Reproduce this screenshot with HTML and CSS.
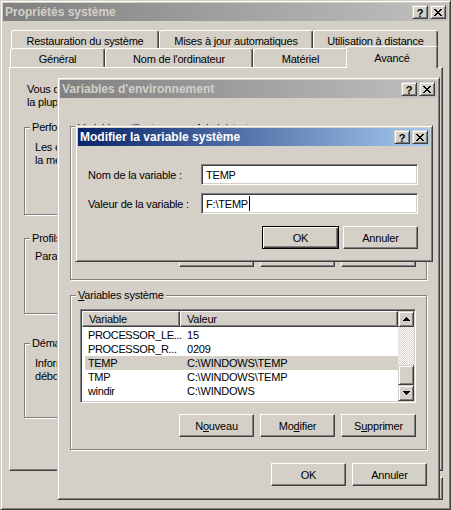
FILE: index.html
```html
<!DOCTYPE html>
<html lang="fr">
<head>
    <meta charset="UTF-8">
    <title>Propriétés système</title>
    <link rel="stylesheet" href="styles.css">
</head>
<body>
    <div class="desktop">

        <!-- Fenêtre principale : Propriétés système -->
        <div class="window sysprop">
            <div class="titlebar inactive">
                <span class="title">Propriétés système</span>
                <div class="title-buttons">
                    <button class="tbtn help">?</button>
                    <button class="tbtn close"><svg width="8" height="7" viewBox="0 0 8 7"><path d="M0 0h2v1H0zM6 0h2v1H6zM1 1h2v1H1zM5 1h2v1H5zM2 2h4v1H2zM3 3h2v1H3zM2 4h4v1H2zM1 5h2v1H1zM5 5h2v1H5zM0 6h2v1H0zM6 6h2v1H6z"/></svg></button>
                </div>
            </div>

            <div class="tabstrip">
                <div class="tab-row back">
                    <div class="tab w-restore">Restauration du système</div>
                    <div class="tab w-updates">Mises à jour automatiques</div>
                    <div class="tab w-remote">Utilisation à distance</div>
                </div>
                <div class="tab-row front">
                    <div class="tab w-general">Général</div>
                    <div class="tab w-name">Nom de l'ordinateur</div>
                    <div class="tab w-hardware">Matériel</div>
                    <div class="tab w-advanced selected">Avancé</div>
                </div>
            </div>

            <div class="tab-panel">
                <p class="intro">Vous devez ouvrir une session en tant qu'administrateur afin d'effectuer<br>la plupart de ces modifications.</p>

                <div class="group perf">
                    <span class="group-label">Performances</span>
                    <p>Les effets visuels, la planification du processeur, l'utilisation de<br>la mémoire et la mémoire virtuelle</p>
                </div>
                <div class="group profiles">
                    <span class="group-label">Profils des utilisateurs</span>
                    <p>Paramètres du Bureau liés à votre ouverture de session</p>
                </div>
                <div class="group startup">
                    <span class="group-label">Démarrage et récupération</span>
                    <p>Informations de démarrage du système, de défaillance du système et de<br>débogage</p>
                </div>
            </div>

            <div class="footer">
                <button class="btn">OK</button>
                <button class="btn">Annuler</button>
                <button class="btn">Appliquer</button>
            </div>
        </div>

        <!-- Variables d'environnement -->
        <div class="window envvars">
            <div class="titlebar inactive">
                <span class="title">Variables d'environnement</span>
                <div class="title-buttons">
                    <button class="tbtn help">?</button>
                    <button class="tbtn close"><svg width="8" height="7" viewBox="0 0 8 7"><path d="M0 0h2v1H0zM6 0h2v1H6zM1 1h2v1H1zM5 1h2v1H5zM2 2h4v1H2zM3 3h2v1H3zM2 4h4v1H2zM1 5h2v1H1zM5 5h2v1H5zM0 6h2v1H0zM6 6h2v1H6z"/></svg></button>
                </div>
            </div>

            <div class="env-body">
                <div class="group user-vars">
                    <span class="group-label"><u>V</u>ariables utilisateur pour Administrateur</span>
                    <div class="listview short">
                        <div class="lv-main">
                            <div class="lv-header">
                                <div class="lv-head col-name">Variable</div>
                                <div class="lv-head col-value">Valeur</div>
                            </div>
                            <div class="lv-rows"></div>
                        </div>
                    </div>
                    <div class="group-buttons">
                        <button class="btn">Nouveau</button>
                        <button class="btn">Modifier</button>
                        <button class="btn">Supprimer</button>
                    </div>
                </div>

                <div class="group system-vars">
                    <span class="group-label"><u>V</u>ariables système</span>
                    <div class="listview">
                        <div class="lv-main">
                            <div class="lv-header">
                                <div class="lv-head col-name">Variable</div>
                                <div class="lv-head col-value">Valeur</div>
                            </div>
                            <div class="lv-rows">
                                <div class="lv-row"><span class="col-name">PROCESSOR_LE...</span><span class="col-value">15</span></div>
                                <div class="lv-row"><span class="col-name">PROCESSOR_R...</span><span class="col-value">0209</span></div>
                                <div class="lv-row selected"><span class="col-name">TEMP</span><span class="col-value">C:\WINDOWS\TEMP</span></div>
                                <div class="lv-row"><span class="col-name">TMP</span><span class="col-value">C:\WINDOWS\TEMP</span></div>
                                <div class="lv-row"><span class="col-name">windir</span><span class="col-value">C:\WINDOWS</span></div>
                            </div>
                        </div>
                        <div class="scrollbar">
                            <div class="sb-btn"><svg width="7" height="4" viewBox="0 0 7 4"><path d="M3 0h1v1h1v1h1v1h1v1H0V3h1V2h1V1h1z"/></svg></div>
                            <div class="sb-track"></div>
                            <div class="sb-thumb"></div>
                            <div class="sb-btn"><svg width="7" height="4" viewBox="0 0 7 4"><path d="M0 0h7v1H6v1H5v1H4v1H3V3H2V2H1V1H0z"/></svg></div>
                        </div>
                    </div>
                    <div class="group-buttons">
                        <button class="btn">N<u>o</u>uveau</button>
                        <button class="btn">Mo<u>d</u>ifier</button>
                        <button class="btn">S<u>u</u>pprimer</button>
                    </div>
                </div>

                <div class="env-footer">
                    <button class="btn">OK</button>
                    <button class="btn">Annuler</button>
                </div>
            </div>
        </div>

        <!-- Modifier la variable système -->
        <div class="window editvar">
            <div class="titlebar">
                <span class="title">Modifier la variable système</span>
                <div class="title-buttons">
                    <button class="tbtn help">?</button>
                    <button class="tbtn close"><svg width="8" height="7" viewBox="0 0 8 7"><path d="M0 0h2v1H0zM6 0h2v1H6zM1 1h2v1H1zM5 1h2v1H5zM2 2h4v1H2zM3 3h2v1H3zM2 4h4v1H2zM1 5h2v1H1zM5 5h2v1H5zM0 6h2v1H0zM6 6h2v1H6z"/></svg></button>
                </div>
            </div>

            <div class="edit-body">
                <div class="edit-grid">
                    <label>Nom de la variable :</label>
                    <div class="field">TEMP</div>
                    <label>Valeur de la variable :</label>
                    <div class="field">F:\TEMP<span class="caret"></span></div>
                </div>
                <div class="edit-buttons">
                    <button class="btn default">OK</button>
                    <button class="btn">Annuler</button>
                </div>
            </div>
        </div>

    </div>
</body>
</html>
```

FILE: styles.css
```css
body {
    margin: 0;
    font-family: "Liberation Sans", Arial, sans-serif;
    font-size: 11px;
    letter-spacing: -0.2px;
    color: #000;
    background: #d4d0c8;
}
p {
    margin: 0;
}
.desktop {
    position: relative;
    width: 451px;
    height: 510px;
    overflow: hidden;
}

/* Fenêtres classiques */
.window {
    position: absolute;
    box-sizing: border-box;
    display: flex;
    flex-direction: column;
    padding: 2px;
    background: #d4d0c8;
    border: 1px solid;
    border-color: #d4d0c8 #404040 #404040 #d4d0c8;
    box-shadow: inset 1px 1px #fff, inset -1px -1px #808080;
}
.sysprop {
    left: 0;
    top: 0;
    width: 451px;
    height: 510px;
}
.envvars {
    left: 57px;
    top: 77px;
    width: 383px;
    height: 423px;
}
.editvar {
    left: 75px;
    top: 125px;
    width: 358px;
    height: 137px;
}

.titlebar {
    display: flex;
    align-items: center;
    height: 18px;
    flex-shrink: 0;
    padding: 0 2px 0 2px;
    color: #fff;
    background: linear-gradient(to right, #0a246a, #a6caf0);
    font-weight: bold;
    font-size: 12px;
    letter-spacing: 0;
}
.titlebar.inactive {
    color: #d4d0c8;
    background: linear-gradient(to right, #808080, #c0c0c0);
}
.titlebar .title {
    flex: 1;
    white-space: nowrap;
    overflow: hidden;
}
.title-buttons {
    display: flex;
    gap: 2px;
}
.tbtn,
.sb-btn,
.sb-thumb {
    box-sizing: border-box;
    background: #d4d0c8;
    border: 1px solid;
    border-color: #d4d0c8 #404040 #404040 #d4d0c8;
    box-shadow: inset 1px 1px #fff, inset -1px -1px #808080;
}
.tbtn {
    width: 16px;
    height: 14px;
    padding: 0;
    display: flex;
    align-items: center;
    justify-content: center;
    font-family: "Liberation Sans", Arial, sans-serif;
    font-weight: bold;
    font-size: 11px;
    color: #000;
}
.tbtn.help {
    padding-top: 1px;
}

/* Boutons */
.btn {
    box-sizing: border-box;
    width: 75px;
    height: 23px;
    padding: 0;
    font: inherit;
    letter-spacing: inherit;
    color: #000;
    background: #d4d0c8;
    border: 1px solid;
    border-color: #fff #404040 #404040 #fff;
    box-shadow: inset -1px -1px #808080;
}
.btn.default {
    width: 77px;
    border: 1px solid #000;
    box-shadow: inset 1px 1px #fff, inset -1px -1px #404040, inset -2px -2px #808080;
}

/* Onglets */
.tabstrip {
    margin: 9px 0 0 6px;
}
.tab-row {
    display: flex;
}
.tab-row.back {
    height: 18px;
    margin-left: 2px;
}
.tab-row.front {
    height: 19px;
    margin-left: 1px;
}
.tab {
    box-sizing: border-box;
    display: flex;
    justify-content: center;
    align-items: center;
    white-space: nowrap;
    background: #d4d0c8;
    border: 1px solid;
    border-bottom: none;
    border-color: #fff #404040 transparent #fff;
    border-radius: 3px 3px 0 0;
    box-shadow: inset -1px 0 #808080;
}
.tab-row.back .tab {
    padding-top: 3px;
}
.tab-row.front .tab {
    padding-top: 2px;
}
.tab-row .tab.selected {
    height: 22px;
    margin: -2px -2px -1px;
    padding-top: 0;
    z-index: 1;
}
.w-restore { width: 148px; }
.w-updates { width: 154px; }
.w-remote { width: 125px; }
.w-general { width: 95px; }
.w-name { width: 148px; }
.w-hardware { width: 95px; }
.w-advanced { width: 92px; }

.tab-panel {
    box-sizing: border-box;
    height: 404px;
    margin: 0 5px 0 6px;
    padding: 15px 14px 0 14px;
    border: 1px solid;
    border-color: #fff #404040 #404040 #fff;
    box-shadow: inset -1px -1px #808080;
    line-height: 13px;
}
.tab-panel .intro {
    padding-left: 3px;
    white-space: nowrap;
}
.tab-panel .group p {
    white-space: nowrap;
}
.tab-panel .perf {
    margin-top: 18px;
    height: 88px;
}
.tab-panel .profiles {
    margin-top: 23px;
    height: 76px;
    padding-top: 11px;
}
.tab-panel .startup {
    margin-top: 29px;
    height: 75px;
}
.footer {
    display: flex;
    justify-content: flex-end;
    gap: 6px;
    margin: 6px 5px 0 0;
}

/* Cadres de groupe */
.group {
    position: relative;
    box-sizing: border-box;
    border: 1px solid #808080;
    box-shadow: inset 1px 1px #fff, 1px 1px #fff;
    padding: 13px 10px 0 10px;
}
.group-label {
    position: absolute;
    top: -7px;
    left: 5px;
    padding: 0 2px;
    line-height: 13px;
    white-space: nowrap;
    background: #d4d0c8;
}

/* Variables d'environnement */
.env-body {
    display: flex;
    flex-direction: column;
    padding: 0 10px;
}
.env-body .group {
    padding: 13px 10px 0 9px;
}
.user-vars {
    margin-top: 28px;
    height: 154px;
}
.user-vars .group-label {
    top: -5px;
}
.system-vars {
    margin-top: 15px;
    height: 155px;
}
.group-buttons {
    display: flex;
    justify-content: flex-end;
    gap: 6px;
    margin-top: 11px;
}
.env-footer {
    display: flex;
    justify-content: flex-end;
    gap: 6px;
    margin-top: 13px;
}

.listview {
    box-sizing: border-box;
    display: flex;
    height: 94px;
    background: #fff;
    border: 1px solid;
    border-color: #808080 #fff #fff #808080;
    box-shadow: inset 1px 1px #404040, inset -1px -1px #d4d0c8;
    padding: 1px;
}
.listview.short {
    height: 93px;
}
.lv-main {
    flex: 1;
    overflow: hidden;
}
.lv-header {
    display: flex;
    height: 16px;
}
.lv-head {
    box-sizing: border-box;
    display: flex;
    align-items: center;
    padding-left: 6px;
    background: #d4d0c8;
    border: 1px solid;
    border-color: #fff #404040 #404040 #fff;
    box-shadow: inset -1px -1px #808080;
}
.lv-head.col-name {
    width: 98px;
}
.lv-head.col-value {
    flex: 1;
}
.lv-rows {
    padding-top: 1px;
}
.lv-row {
    display: flex;
    height: 14px;
    line-height: 14px;
    margin-left: 3px;
    white-space: nowrap;
}
.lv-row .col-name {
    flex: none;
    width: 96px;
    padding-left: 3px;
    box-sizing: border-box;
    letter-spacing: -0.35px;
}
.lv-row .col-value {
    padding-left: 6px;
}
.lv-row.selected {
    background: #d4d0c8;
}

.scrollbar {
    width: 16px;
    display: flex;
    flex-direction: column;
}
.sb-btn {
    height: 16px;
    display: flex;
    align-items: center;
    justify-content: center;
}
.sb-track {
    flex: 1;
    background: repeating-conic-gradient(#fff 0 25%, #d4d0c8 0 50%) 0 0 / 2px 2px;
}
.sb-thumb {
    height: 20px;
}

/* Modifier la variable */
.edit-body {
    padding: 18px 12px 0 10px;
}
.edit-grid {
    display: grid;
    grid-template-columns: 113px 217px;
    row-gap: 8px;
    align-items: center;
}
.edit-grid label {
    white-space: nowrap;
}
.field {
    box-sizing: border-box;
    display: flex;
    align-items: center;
    height: 21px;
    padding: 0 4px;
    background: #fff;
    border: 1px solid;
    border-color: #808080 #fff #fff #808080;
    box-shadow: inset 1px 1px #404040, inset -1px -1px #d4d0c8;
}
.caret {
    width: 1px;
    height: 15px;
    margin-left: 1px;
    background: #000;
}
.edit-buttons {
    display: flex;
    justify-content: flex-end;
    gap: 4px;
    margin-top: 12px;
}
```
